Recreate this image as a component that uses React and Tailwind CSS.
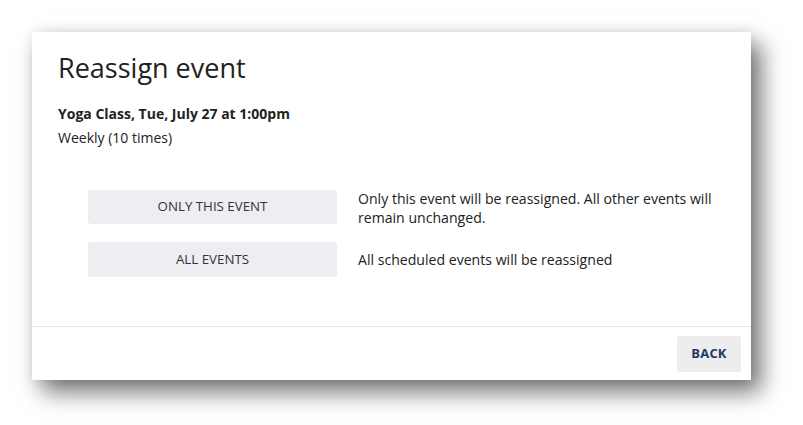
export default function App() {
  return (
    <div className="w-[803px] h-[425px] bg-white" style={{ fontFamily: '"Open Sans", sans-serif' }}>
      <div className="pt-[32px] pl-[32px]">
        <div className="w-[719px] h-[348px] bg-white flex flex-col shadow-[10px_12px_22px_rgba(0,0,0,0.55),0_0_12px_rgba(0,0,0,0.08)]">
          <div className="flex-1 pl-[26px] pr-[26px] pt-[18px]">
            <h1 className="text-[27px] leading-[36px] text-[#222222]">Reassign event</h1>
            <div className="mt-[16px] text-[14px] leading-[24px] text-[#222222]">
              <div className="font-bold">Yoga Class, Tue, July 27 at 1:00pm</div>
              <div>Weekly (10 times)</div>
            </div>
            <div className="mt-[40px] ml-[30px] flex flex-col gap-[15px]">
              <div className="flex items-start">
                <button className="w-[249px] h-[34px] shrink-0 rounded-[3px] bg-[#eeedf2] text-[13.3px] text-[#333333] uppercase">Only this event</button>
                <p className="ml-[21px] w-[370px] text-[14.1px] leading-[19px] text-[#222222] -mt-[1px]">Only this event will be reassigned. All other events will remain unchanged.</p>
              </div>
              <div className="flex items-center">
                <button className="w-[249px] h-[35px] shrink-0 rounded-[3px] bg-[#eeedf2] text-[13.3px] text-[#333333] uppercase">All events</button>
                <p className="ml-[21px] text-[14.1px] leading-[19px] text-[#222222]">All scheduled events will be reassigned</p>
              </div>
            </div>
          </div>
          <div className="h-[54px] border-t border-[#e6e6e6] flex items-center justify-end pr-[10px]">
            <button className="w-[64px] h-[36px] rounded-[3px] bg-[#ededed] text-[13px] font-bold text-[#1e3a63] tracking-[0.2px]">BACK</button>
          </div>
        </div>
      </div>
    </div>
  );
}
